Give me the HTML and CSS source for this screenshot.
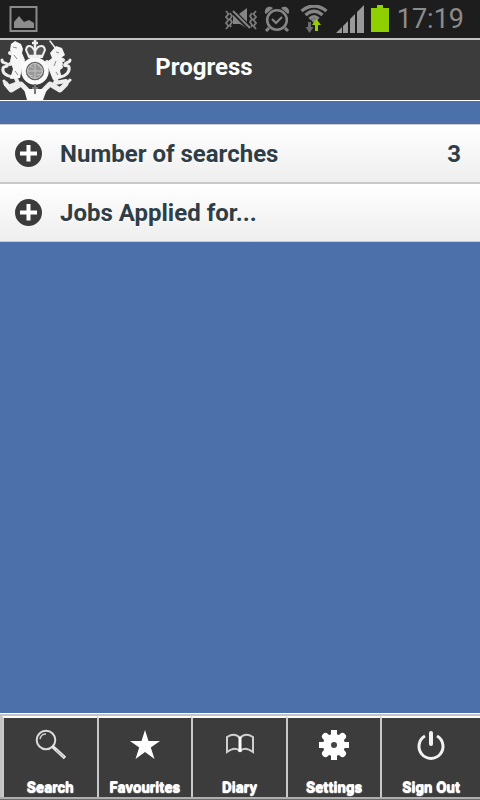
FILE: index.html
```html
<!DOCTYPE html>
<html lang="en">
<head>
<meta charset="utf-8">
<meta name="viewport" content="width=device-width, initial-scale=1">
<title>Progress</title>
<link rel="stylesheet" href="styles.css">
</head>
<body>
<div class="status">
  <svg class="status-picture" width="30" height="28" viewBox="0 0 30 28"><rect x="1.500" y="2" width="26" height="24" fill="none" stroke="#8b8b8b" stroke-width="2"/><path d="M5 23V17L10 11L15 17L20 15L25 18V23Z" fill="#8b8b8b"/></svg>
  <div class="status-icons">
    <svg width="32" height="28" viewBox="0 0 32 28"><g fill="none" stroke="#7c7c7c" stroke-width="1.800"><path d="M1 6l2.500 3L1 12l2.500 3L1 18l2.500 3L1 24M5 8l2 3-2 3 2 3-2 3 1 2M31 6l-2.500 3L31 12l-2.500 3L31 18l-2.500 3L31 24M27 8l-2 3 2 3-2 3 2 3-1 2"/></g><path d="M8 10h5l10 10v4l-8-5H8ZM14 9l8-6v14Z" fill="#858585"/><path d="M8 7L24 23" stroke="#1d1d1d" stroke-width="4"/><path d="M8 6L25 23" stroke="#858585" stroke-width="2"/></svg>
    <svg class="alarm" width="26" height="28" viewBox="0 0 26 28" fill="none" stroke="#858585"><circle cx="13" cy="15" r="9.800" stroke-width="2.600"/><path d="M8 14l4 4 6-6" stroke-width="2.200"/><path d="M5 23l-3 3M21 23l3 3" stroke-width="3"/><path d="M1 8C0 3 5 0 9 3L2 9ZM25 8C26 3 21 0 17 3L24 9Z" fill="#858585" stroke="none"/></svg>
    <svg class="wifi" width="28" height="28" viewBox="0 0 28 28"><g fill="none" stroke="#858585" stroke-width="3.300"><path d="M1.500 6Q14-4 26.500 6M5.500 10Q14 2.500 22.500 10M9.500 14Q14 9.500 18.500 14"/></g><path d="M11 15L14.500 19L17.500 15Q14 12.500 11 15Z" fill="#858585"/><path d="M8 17h3v5h2.500L9.500 28L5.500 22H8Z" fill="#6c6c6c"/><path d="M15 26V20H12L16.500 14L21 20H18V26Z" fill="#99cc00"/></svg>
    <svg class="signal" width="28" height="28" viewBox="0 0 28 28" fill="#999"><path d="M0 28L6 22V28ZM7 28V21L12 16V28ZM14 28V14L19 9V28ZM21 28V7L28 0V28Z"/></svg>
    <svg class="battery" width="18" height="28" viewBox="0 0 18 28" fill="#8fd000"><path d="M0 3H6V0H12V3H18V27H0Z"/></svg>
    <span class="clock">17:19</span>
  </div>
</div>
<header class="header">
  <svg class="crest" width="72" height="60" viewBox="0 0 72 60" role="img" aria-label="Royal coat of arms">
    <g fill="none" stroke="#ededed" stroke-linecap="round" stroke-linejoin="round">
      <path d="M13 37C6 36 2 33 3 28C4 25 9 28 7 24C5 22 2 24 2 20" stroke-width="3"/>
      <path d="M60 37C66 36 70 32 69 27C68 24 63 27 65 24C66 22 70 23 70 20" stroke-width="3"/>
      <path d="M17 16L10 13M18 21L10 24M14 34L18 43L10 46M20 27L25 23" stroke-width="4"/>
      <path d="M55 17L63 20M54 23L61 27M58 34L55 43L66 41M50 27L47 22" stroke-width="4"/>
      <path d="M50 1L56 9" stroke-width="1.500"/>
      <path d="M6 44L11 50L21 44L29 52H42L50 44L60 50L66 44" stroke-width="5"/>
      <path d="M6 45L4 41M66 44L70 40" stroke-width="3"/>
    </g>
    <path d="M11 4L15 1L21 4L23 9L22 13L25 20L22 28L20 38L10 39L13 29L10 21L12 13L10 10Z" fill="#f7f7f7"/>
    <path d="M50 13L56 6L62 8L65 15L61 18L63 24L60 31L62 38L53 40L49 30L47 22L52 18Z" fill="#f4f4f4"/>
    <path d="M13 7l4 1M14 15l3 4M15 31l3 4M56 12l3 1M56 21l-2 5M56 32l2 3" stroke="#8a8a8a" stroke-width="1"/>
    <path d="M24 49H47L43 60H27Z" fill="#f9f9f9"/>
    <circle cx="35" cy="31" r="11.500" fill="#666" stroke="#fafafa" stroke-width="4.500"/>
    <circle cx="35" cy="31" r="7.500" fill="#989898" stroke="#c9c9c9"/>
    <path d="M35 23V39M28 31H42M30 26l3 2M38 25l3 3M29 35l4 1M37 35l4-1" stroke="#c4c4c4" stroke-width="1"/>
    <path d="M35 44V54M32 48h6" stroke="#777" stroke-width="2"/>
    <path d="M29 17L26 10Q27 4 32 7L35 11L38 7Q44 4 45 10L42 17Z" fill="#555" stroke="#eee" stroke-width="2"/>
    <path d="M35 0V16M32 3h6M28 16h15" stroke="#eee" stroke-width="2.500"/>
  </svg>
  <h1 class="title">Progress</h1>
</header>
<main class="content">
  <ul class="list">
    <li><button class="row" type="button"><svg class="plus" width="28" height="28" viewBox="0 0 28 28"><circle cx="14.500" cy="13.500" r="13.500" fill="#3b3b3b"/><path d="M14.500 5V21.500M6 13.500H23" stroke="#fff" stroke-width="4"/></svg><span>Number of searches</span><span class="count">3</span></button></li>
    <li><button class="row" type="button"><svg class="plus" width="28" height="28" viewBox="0 0 28 28"><circle cx="14.500" cy="13.500" r="13.500" fill="#3b3b3b"/><path d="M14.500 5V21.500M6 13.500H23" stroke="#fff" stroke-width="4"/></svg><span>Jobs Applied for...</span></button></li>
  </ul>
</main>
<nav class="tabs">
  <a class="tab" href="#search"><svg width="32" height="32" viewBox="0 0 32 32" fill="none"><circle cx="12" cy="11" r="9.300" stroke="#ddd" stroke-width="2"/><path d="M6 10Q7 5 12 5" stroke="#ccc" stroke-width="1.600"/><path d="M18 17L31 29" stroke="#e6e6e6" stroke-width="3.500"/><path d="M22 21L30 28" stroke="#aaa" stroke-width="1"/></svg><span>Search</span></a>
  <a class="tab" href="#favourites"><svg width="32" height="32" viewBox="0 0 32 32"><path d="M16 1L19.500 12H31L21.800 18.500L25.500 30L16 23L6.500 30L10.200 18.500L1 12H12.500Z" fill="#fff"/></svg><span>Favourites</span></a>
  <a class="tab" href="#diary"><svg width="32" height="32" viewBox="0 0 32 32" fill="none" stroke="#cfcfcf" stroke-width="2"><path d="M16 22Q11 17 3 23V8Q11 3 16 9Q21 3 29 8V23Q21 17 16 22Z"/><path d="M16 8V23" stroke="#fff" stroke-width="3"/></svg><span>Diary</span></a>
  <a class="tab" href="#settings"><svg width="32" height="32" viewBox="0 0 32 32"><g stroke="#fff" stroke-width="6"><path d="M16 1V31M1 16H31"/><path d="M7.500 7.500L24.500 24.500M24.500 7.500L7.500 24.500" stroke-width="7" stroke-linecap="round"/></g><circle cx="16" cy="16" r="11" fill="#fff"/><circle cx="16" cy="16" r="3" fill="#444"/></svg><span>Settings</span></a>
  <a class="tab" href="#signout"><svg width="32" height="32" viewBox="0 0 32 32" fill="none" stroke="#f2f2f2"><path d="M10 7A12 12 0 1 0 22 7" stroke-width="3"/><path d="M16 4V15" stroke-width="4" stroke-linecap="round"/></svg><span>Sign Out</span></a>
</nav>
</body>
</html>
```
FILE: styles.css
```css
* {
  box-sizing: border-box;
}

body {
  margin: 0;
  min-height: 100vh;
  display: flex;
  flex-direction: column;
  background: #4c70aa;
  font-family: Roboto, "Liberation Sans", sans-serif;
}

svg {
  display: block;
  flex: none;
}

.status {
  display: flex;
  align-items: center;
  justify-content: space-between;
  height: 38px;
  padding: 0 16px 0 9px;
  background: #1d1d1d;
}

.status-icons {
  display: flex;
  align-items: center;
}

.alarm {
  margin-left: 7px;
}

.wifi {
  margin-left: 10px;
}

.signal {
  margin-left: 8px;
}

.battery {
  margin-left: 7px;
}

.clock {
  margin-left: 8px;
  color: #8c8c8c;
  font-size: 27px;
  font-weight: 400;
  line-height: 36px;
}

.header {
  display: flex;
  align-items: flex-start;
  border-top: 2px solid #c4c4c4;
  border-bottom: 1px solid #fff;
  background: #3c3c3c;
}

.title {
  flex: 1;
  margin: 0;
  padding: 12px 144px 0 0;
  color: #fff;
  font-size: 24px;
  font-weight: 700;
  line-height: 30px;
  text-align: center;
}

.content {
  flex: 1;
  padding-top: 23px;
}

.list {
  margin: 0;
  padding: 0;
  list-style: none;
  border-top: 1px solid #ccc;
  border-bottom: 1px solid #ccc;
}

.list li + li {
  border-top: 2px solid #c9c9c9;
}

.row {
  display: flex;
  align-items: center;
  width: 100%;
  height: 57px;
  padding: 0 19px 0 14px;
  border: 0;
  background: linear-gradient(#fff, #eee);
  color: #2f3e46;
  font: 700 24px/30px Roboto, "Liberation Sans", sans-serif;
  text-align: left;
  text-shadow: 0 1px 0 #fff;
}

.plus {
  margin-right: 18px;
}

.count {
  margin-left: auto;
}

.tabs {
  display: grid;
  grid-template-columns: repeat(4, 19fr) 20fr;
  margin-bottom: 1px;
  padding-left: 2px;
  border-top: 1px solid #fff;
  border-bottom: 2px solid #b0b0b0;
  background: #c4c4c4;
}

.tab {
  display: flex;
  flex-direction: column;
  align-items: center;
  height: 81px;
  margin-top: 2px;
  padding-top: 11px;
  border-top: 2px solid #fff;
  border-left: 2px solid #c9c9c9;
  background: #3c3c3c;
  color: #fff;
  font-size: 15px;
  font-weight: 700;
  line-height: 20px;
  text-decoration: none;
  text-shadow: 0 1px 1px #fff, 0 1px 1px #fff;
}

.tab span {
  margin-top: 16px;
}
```
